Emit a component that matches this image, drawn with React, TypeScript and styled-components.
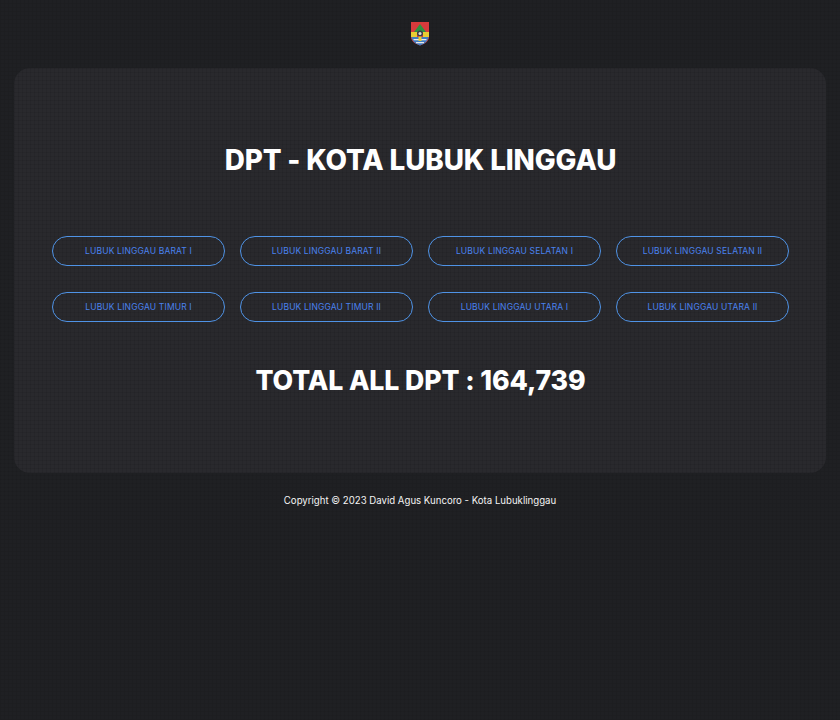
import React from "react";
import styled, { createGlobalStyle } from "styled-components";

const Global = createGlobalStyle`
  html, body { margin: 0; padding: 0; }
  html { background-color: #1f2023; }
  body {
    min-height: 720px;
    background-image:
      repeating-linear-gradient(90deg, rgba(0,0,0,0.05) 0 1px, transparent 1px 4px),
      repeating-linear-gradient(0deg, rgba(0,0,0,0.05) 0 1px, transparent 1px 4px);
    font-family: "Inter", "Liberation Sans", sans-serif;
  }
`;

const Page = styled.div`
  display: flex;
  flex-direction: column;
  align-items: stretch;
  padding: 0 14px;
`;

const Header = styled.header`
  height: 68px;
  display: flex;
  align-items: flex-start;
  justify-content: center;
  padding-top: 21px;
  box-sizing: border-box;
`;

const Card = styled.main`
  height: 405px;
  box-sizing: border-box;
  border-radius: 16px;
  background-color: #29292d;
  background-image:
    repeating-linear-gradient(90deg, rgba(0,0,0,0.07) 0 1px, transparent 1px 4px),
    repeating-linear-gradient(0deg, rgba(0,0,0,0.07) 0 1px, transparent 1px 4px);
  padding: 74px 37px 0 38px;
  display: flex;
  flex-direction: column;
  align-items: stretch;
`;

const Title = styled.h1`
  margin: 0;
  height: 36px;
  line-height: 36px;
  text-align: center;
  font-size: 27.800px;
  font-weight: 800;
  letter-spacing: -0.1px;
  color: #ffffff;
`;

const Grid = styled.div`
  margin-top: 58px;
  display: grid;
  grid-template-columns: repeat(4, 173px);
  justify-content: space-between;
  row-gap: 26px;
`;

const Pill = styled.a`
  height: 30px;
  box-sizing: border-box;
  border: 1px solid #4f93e6;
  border-radius: 15px;
  display: flex;
  align-items: center;
  justify-content: center;
  font-size: 8.500px;
  font-weight: 400;
  letter-spacing: 0.15px;
  color: #4a82ee;
  white-space: nowrap;
`;

const Total = styled.h2`
  margin: 40px 0 0;
  height: 36px;
  line-height: 36px;
  text-align: center;
  font-size: 26.700px;
  font-weight: 800;
  letter-spacing: -0.1px;
  color: #ffffff;
`;

const Footer = styled.footer`
  margin-top: 21px;
  height: 13px;
  line-height: 13px;
  text-align: center;
  font-size: 9.650px;
  color: #f4f4f4;
`;

const Crest = () => (
  <svg width="20" height="25" viewBox="0 0 20 25" role="img" aria-label="Lambang Kota Lubuklinggau">
    <path d="M1 1h18v15c0 4-4 7-9 8.500C5 23 1 20 1 16z" fill="#d83a3c" />
    <path d="M4 11 10 3 16 11z" fill="#2e9140" />
    <path d="M1 11h6v5H1zM13 11h6v5h-6z" fill="#e8cc32" />
    <circle cx="10" cy="12.500" r="3" fill="#3a3f46" />
    <circle cx="10" cy="12.500" r="1.500" fill="#d8dadc" />
    <path d="M1.500 16h17c-.5 4-4 7-8.500 8.500C5.500 23 2 20 1.500 16z" fill="#3e7cc0" />
    <path d="M3.500 18h13v1.300h-13zM6 21h8v1.300H6z" fill="#e6e8ea" />
    <path d="M8.500 15.500h3V20h-3z" fill="#e8cc32" />
  </svg>
);

const districts = [
  "LUBUK LINGGAU BARAT I",
  "LUBUK LINGGAU BARAT II",
  "LUBUK LINGGAU SELATAN I",
  "LUBUK LINGGAU SELATAN II",
  "LUBUK LINGGAU TIMUR I",
  "LUBUK LINGGAU TIMUR II",
  "LUBUK LINGGAU UTARA I",
  "LUBUK LINGGAU UTARA II",
];

export default function App() {
  return (
    <>
      <Global />
      <Page>
        <Header>
          <Crest />
        </Header>
        <Card>
          <Title>DPT - KOTA LUBUK LINGGAU</Title>
          <Grid>
            {districts.map((d) => (
              <Pill key={d}>{d}</Pill>
            ))}
          </Grid>
          <Total>TOTAL ALL DPT : 164,739</Total>
        </Card>
        <Footer>Copyright © 2023 David Agus Kuncoro - Kota Lubuklinggau</Footer>
      </Page>
    </>
  );
}
